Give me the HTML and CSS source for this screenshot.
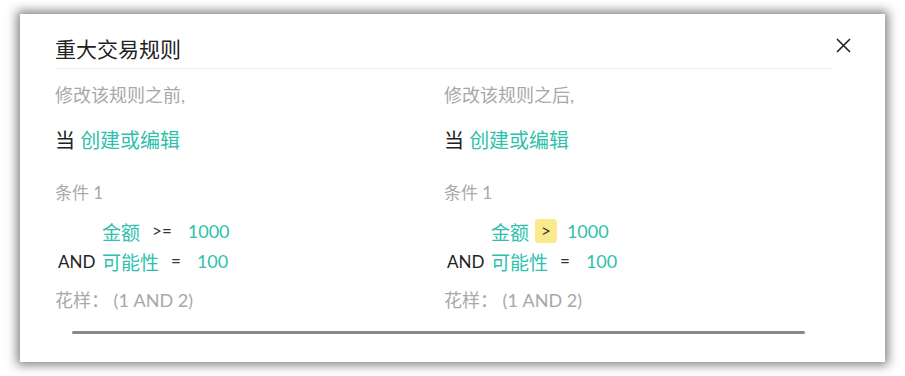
FILE: index.html
```html
<!DOCTYPE html>
<html lang="zh">
<head>
    <meta charset="UTF-8">
    <meta name="viewport" content="width=device-width, initial-scale=1.0">
    <title>重大交易规则</title>
    <link rel="stylesheet" href="styles.css">
</head>
<body>
    <div class="dialog">
        <div class="top">
            <h1 class="title">重大交易规则</h1>
            <button class="close" aria-label="关闭">
                <svg width="15" height="15" viewBox="0 0 15 15">
                    <path d="M1 1 L14 14 M14 1 L1 14" stroke="#222" stroke-width="1.6" fill="none"/>
                </svg>
            </button>
        </div>
        <div class="compare">
            <div class="col">
                <div class="caption">修改该规则之前,</div>
                <div class="when">当 <span class="teal">创建或编辑</span></div>
                <div class="cond_title">条件 1</div>
                <div class="rule">
                    <span class="join"></span>
                    <span class="field">金额</span>
                    <span class="op">&gt;=</span>
                    <span class="value">1000</span>
                </div>
                <div class="rule">
                    <span class="join">AND</span>
                    <span class="field">可能性</span>
                    <span class="op">=</span>
                    <span class="value">100</span>
                </div>
                <div class="pattern">花样： (1 AND 2)</div>
            </div>
            <div class="col">
                <div class="caption">修改该规则之后,</div>
                <div class="when">当 <span class="teal">创建或编辑</span></div>
                <div class="cond_title">条件 1</div>
                <div class="rule">
                    <span class="join"></span>
                    <span class="field">金额</span>
                    <span class="op changed">&gt;</span>
                    <span class="value">1000</span>
                </div>
                <div class="rule">
                    <span class="join">AND</span>
                    <span class="field">可能性</span>
                    <span class="op">=</span>
                    <span class="value">100</span>
                </div>
                <div class="pattern">花样： (1 AND 2)</div>
            </div>
        </div>
        <div class="scrollbar"></div>
    </div>
</body>
</html>
```
FILE: styles.css
```css
body{
    margin:0;
    padding:14px 20px;
    background-color:#fff;
    font-family: Lato, "Noto Sans CJK SC", sans-serif;
}
.dialog{
    box-sizing: border-box;
    height:348px;
    padding-left:35px;
    background-color:#fff;
    box-shadow: 0 0 10px 3px rgba(0,0,0,0.5);
}
.top{
    display:flex;
    align-items:flex-start;
}
.title{
    flex:1;
    margin:0;
    padding:21px 0 5px 0;
    font-size:21px;
    line-height:28px;
    font-weight:normal;
    color:#222;
    border-bottom:1px solid #ececec;
}
.close{
    margin:24px 34px 0 4px;
    padding:0;
    width:15px;
    height:15px;
    border:none;
    background:none;
    display:flex;
}
.compare{
    display:grid;
    grid-template-columns: 389px 389px;
}
.caption{
    margin-top:13px;
    font-size:18px;
    line-height:26px;
    color:#a8a8a8;
}
.when{
    margin-top:18px;
    font-size:20px;
    line-height:28px;
    color:#222;
}
.teal{
    color:#2fbfad;
}
.cond_title{
    margin-top:27px;
    font-size:17px;
    line-height:24px;
    color:#a8a8a8;
}
.rule{
    display:flex;
    align-items:center;
    height:30px;
}
.cond_title + .rule{
    margin-top:11px;
}
.join{
    width:47px;
    padding-left:3px;
    box-sizing:border-box;
    font-size:17px;
    color:#222;
}
.field{
    font-size:19px;
    color:#2fbfad;
}
.op{
    margin:0 10px 0 6px;
    padding:0 6px;
    font-size:17px;
    line-height:24px;
    color:#333;
    border-radius:4px;
}
.op.changed{
    background-color:#fbe98e;
}
.value{
    font-size:18px;
    color:#2fbfad;
}
.pattern{
    margin-top:11px;
    font-size:18px;
    line-height:26px;
    color:#a8a8a8;
}
.scrollbar{
    margin:18px 0 0 17px;
    width:733px;
    height:3px;
    border-radius:2px;
    background-color:#8a8a8a;
}
```
